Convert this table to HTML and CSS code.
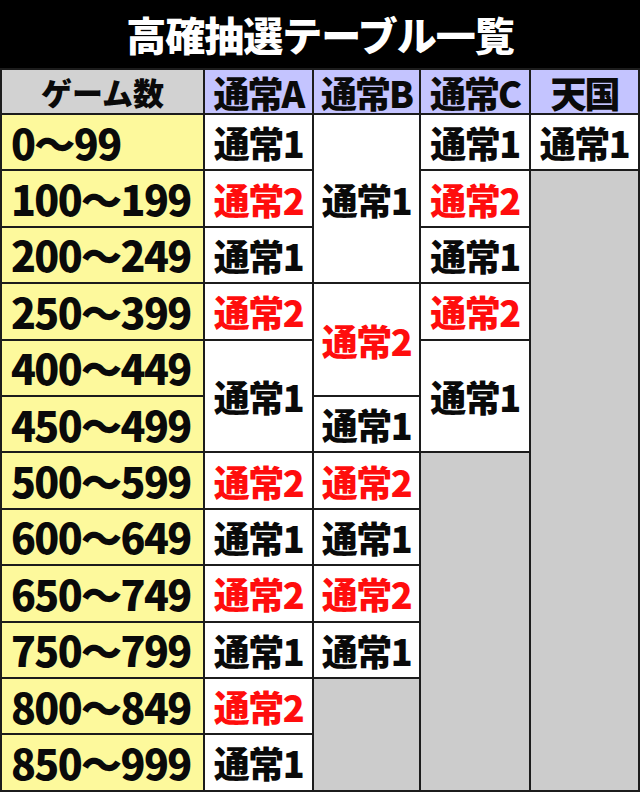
FILE: index.html
```html
<!DOCTYPE html>
<html lang="ja">
<head>
<meta charset="utf-8">
<link rel="stylesheet" href="styles.css">
</head>
<body>
<div class="page">
  <h1 class="title">高確抽選テーブル一覧</h1>
  <table class="tbl">
    <colgroup>
      <col class="c-game"><col class="c-a"><col class="c-b"><col class="c-c"><col class="c-d">
    </colgroup>
    <thead>
      <tr class="hrow">
        <th class="h-game">ゲーム数</th>
        <th class="h-mode">通常A</th>
        <th class="h-mode">通常B</th>
        <th class="h-mode">通常C</th>
        <th class="h-mode">天国</th>
      </tr>
    </thead>
    <tbody>
      <tr class="row">
        <td class="game">0～99</td>
        <td class="v">通常1</td>
        <td class="v" rowspan="3">通常1</td>
        <td class="v">通常1</td>
        <td class="v">通常1</td>
      </tr>
      <tr class="row">
        <td class="game">100～199</td>
        <td class="v red">通常2</td>
        <td class="v red">通常2</td>
        <td class="empty" rowspan="11"></td>
      </tr>
      <tr class="row">
        <td class="game">200～249</td>
        <td class="v">通常1</td>
        <td class="v">通常1</td>
      </tr>
      <tr class="row">
        <td class="game">250～399</td>
        <td class="v red">通常2</td>
        <td class="v red" rowspan="2">通常2</td>
        <td class="v red">通常2</td>
      </tr>
      <tr class="row">
        <td class="game">400～449</td>
        <td class="v" rowspan="2">通常1</td>
        <td class="v" rowspan="2">通常1</td>
      </tr>
      <tr class="row">
        <td class="game">450～499</td>
        <td class="v">通常1</td>
      </tr>
      <tr class="row">
        <td class="game">500～599</td>
        <td class="v red">通常2</td>
        <td class="v red">通常2</td>
        <td class="empty" rowspan="6"></td>
      </tr>
      <tr class="row">
        <td class="game">600～649</td>
        <td class="v">通常1</td>
        <td class="v">通常1</td>
      </tr>
      <tr class="row">
        <td class="game">650～749</td>
        <td class="v red">通常2</td>
        <td class="v red">通常2</td>
      </tr>
      <tr class="row">
        <td class="game">750～799</td>
        <td class="v">通常1</td>
        <td class="v">通常1</td>
      </tr>
      <tr class="row">
        <td class="game">800～849</td>
        <td class="v red">通常2</td>
        <td class="empty" rowspan="2"></td>
      </tr>
      <tr class="row">
        <td class="game">850～999</td>
        <td class="v">通常1</td>
      </tr>
    </tbody>
  </table>
</div>
</body>
</html>
```

FILE: styles.css
```css
html, body {
  margin: 0;
  padding: 0;
  background: #000;
}

.page {
  width: 640px;
  height: 792px;
  overflow: hidden;
  font-family: "Noto Sans CJK JP", "Noto Sans", sans-serif;
  font-weight: 900;
  color: #0a0a0a;
}

.title {
  margin: 0;
  height: 68px;
  background: #000;
  color: #fff;
  font-size: 40px;
  font-weight: 900;
  line-height: 68px;
  text-align: center;
  letter-spacing: -1px;
}

.tbl {
  width: 640px;
  table-layout: fixed;
  border-collapse: separate;
  border-spacing: 2px;
  background: #1c1c1c;
}

.c-game { width: 201px; }
.c-a { width: 107px; }
.c-b { width: 105px; }
.c-c { width: 108px; }
.c-d { width: 107px; }

.tbl th,
.tbl td {
  padding: 0;
  text-align: center;
  vertical-align: middle;
  line-height: 1;
  white-space: nowrap;
}

.hrow { height: 43px; }

.h-game {
  background: #d2d2d2;
  font-size: 31px;
  font-weight: 900;
}

.h-mode {
  background: #c4c4ff;
  font-size: 36px;
  font-weight: 900;
  letter-spacing: -2px;
}

.row { height: 54.4px; }

.game {
  background: #fdf99c;
  text-align: left !important;
  padding-left: 9px !important;
  font-size: 41px;
  letter-spacing: -1.6px;
}

.v {
  background: #fff;
  font-size: 36px;
  letter-spacing: -1.5px;
}

.red { color: #ff0d0d; }

.empty { background: #cccccc; }
```
